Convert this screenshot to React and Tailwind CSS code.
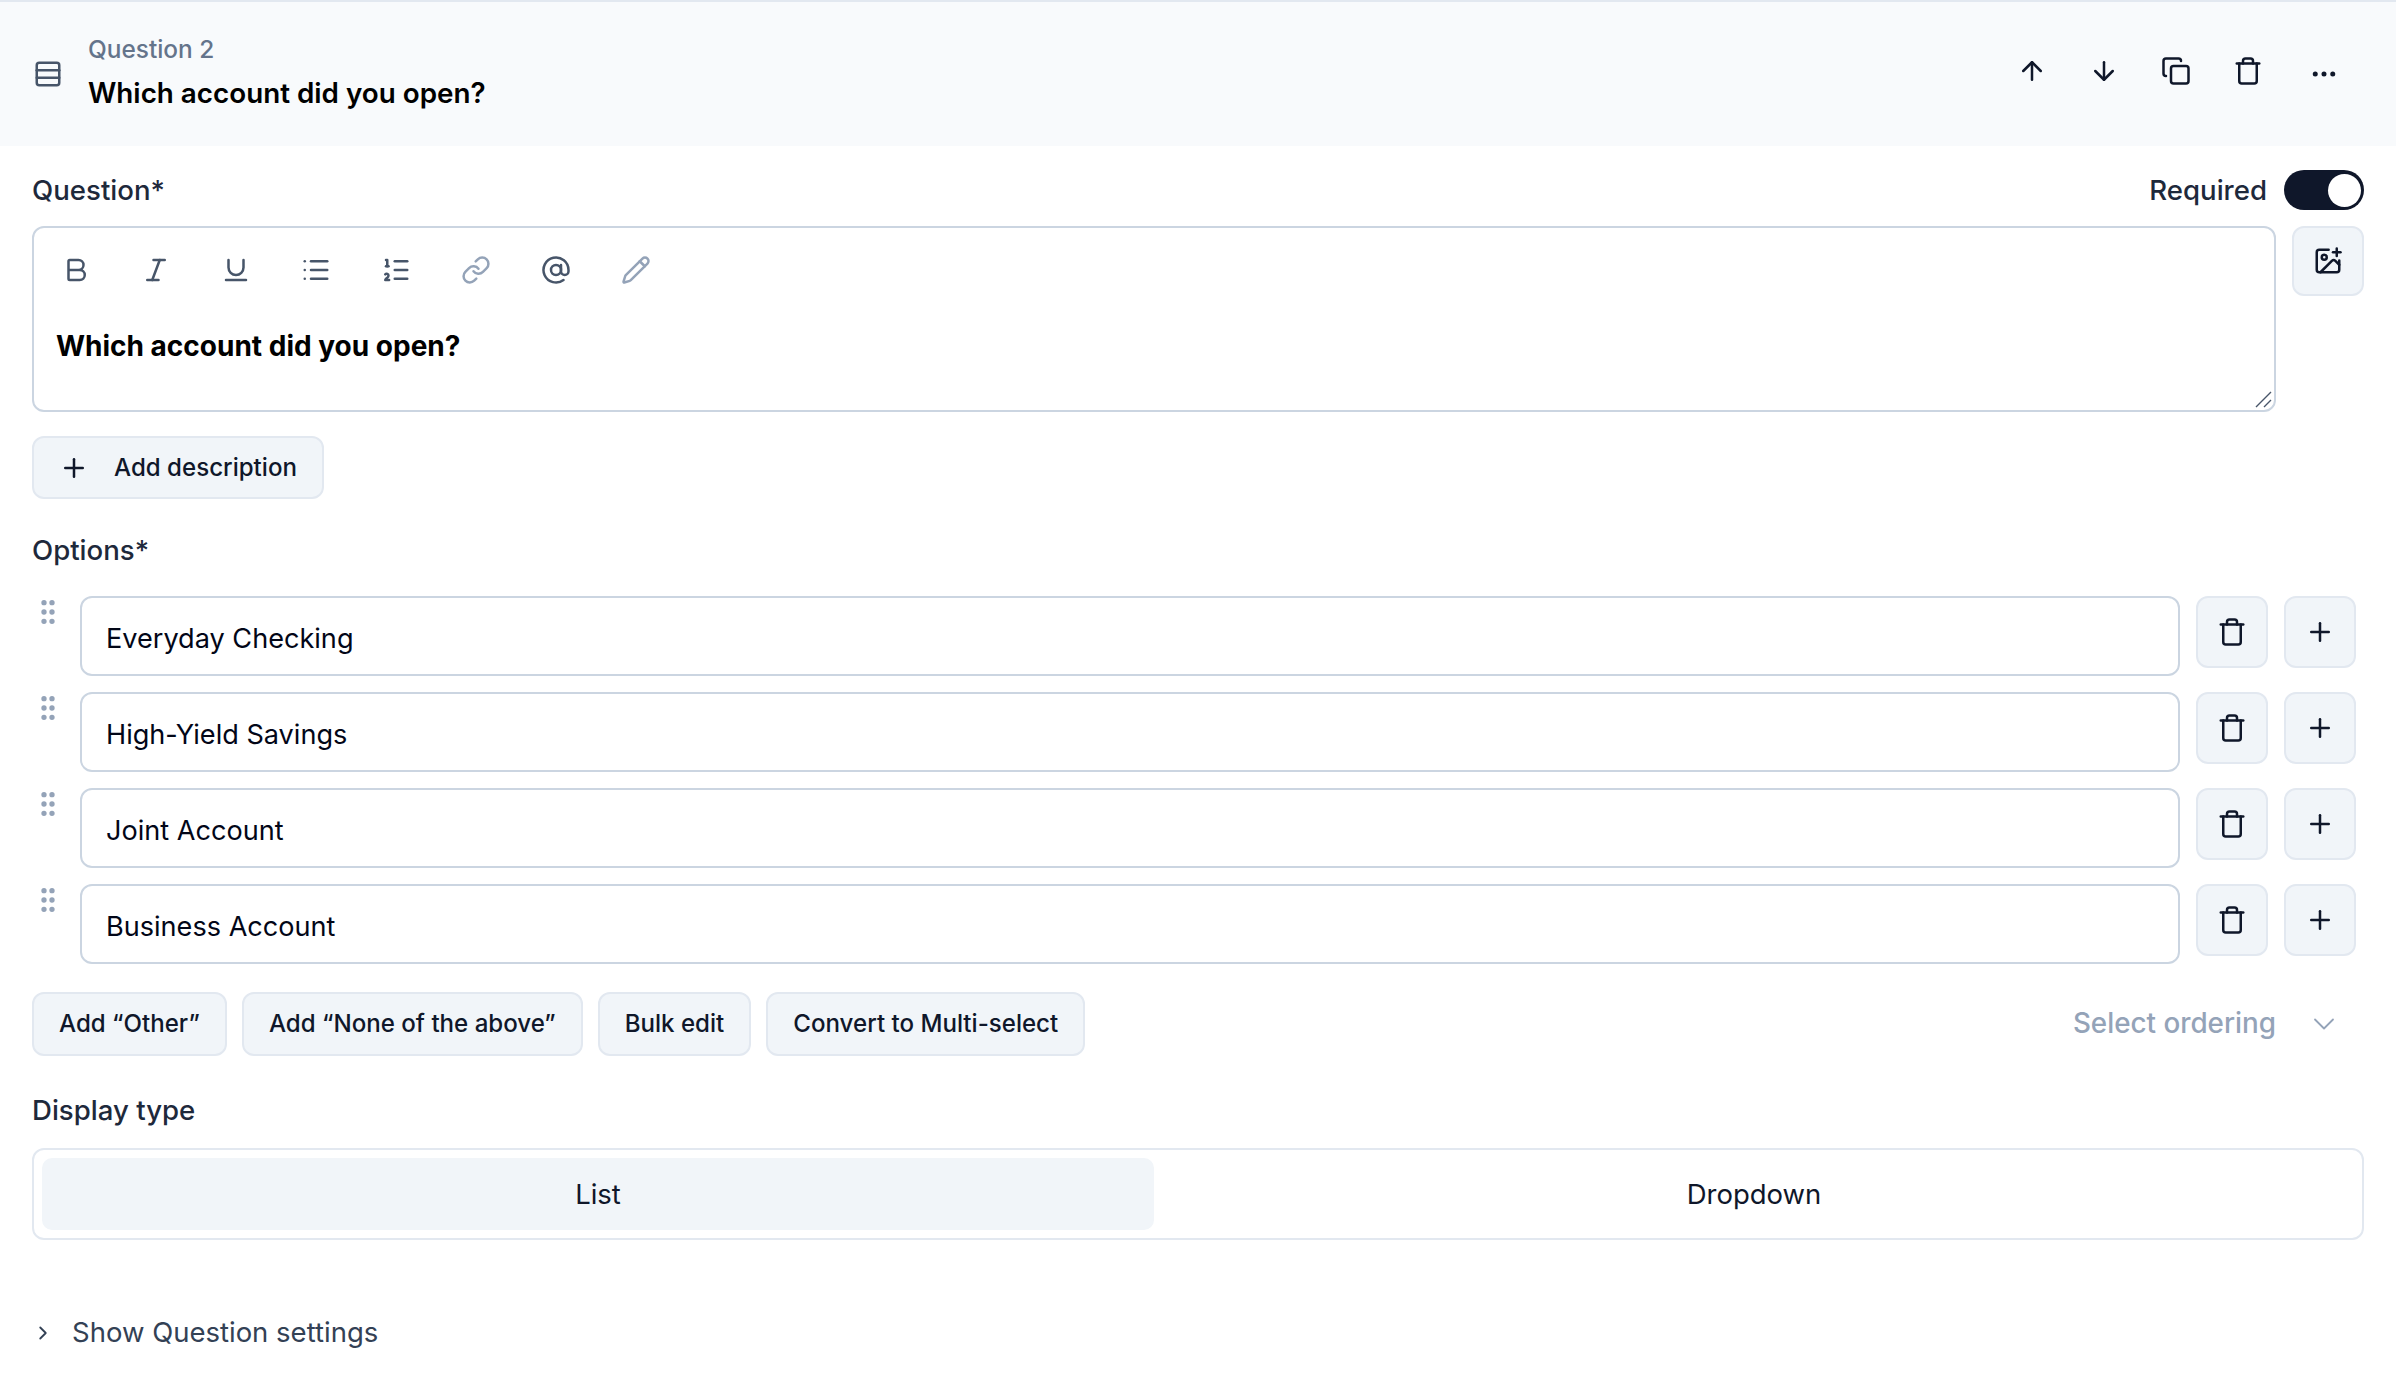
import React from "react";
import {
  ArrowUp,
  ArrowDown,
  Copy,
  Trash,
  Ellipsis,
  Rows3,
  Bold,
  Italic,
  Underline,
  List,
  ListOrdered,
  Link,
  AtSign,
  Pencil,
  ImagePlus,
  Plus,
  GripVertical,
  ChevronDown,
  ChevronRight,
} from "lucide-react";

const options = ["Everyday Checking", "High-Yield Savings", "Joint Account", "Business Account"];

const tools = [
  { icon: Bold, color: "text-[#475569]" },
  { icon: Italic, color: "text-[#475569]" },
  { icon: Underline, color: "text-[#475569]" },
  { icon: List, color: "text-[#475569]" },
  { icon: ListOrdered, color: "text-[#475569]" },
  { icon: Link, color: "text-[#94a3b8]" },
  { icon: AtSign, color: "text-[#475569]" },
  { icon: Pencil, color: "text-[#94a3b8]" },
];

const SquareButton = ({ children, className = "" }) => (
  <button className={`flex h-[72px] w-[72px] shrink-0 items-center justify-center rounded-xl border-2 border-[#e2e8f0] bg-[#f1f5f9] text-[#0f172a] ${className}`}>
    {children}
  </button>
);

const PillButton = ({ children }) => (
  <button className="flex h-[64px] items-center rounded-xl border-2 border-[#e2e8f0] bg-[#f1f5f9] px-[25px] text-[24.1px] font-medium text-[#0f172a]">
    {children}
  </button>
);

export default function App() {
  return (
    <div className="h-[1384px] w-full overflow-hidden bg-white font-['Inter',sans-serif]">
      {/* Header */}
      <div className="flex h-[146px] items-center border-t-2 border-[#e2e8f0] bg-[#f8fafc] pl-[33px] pr-[57px]">
        <Rows3 size={30} className="text-[#475569]" strokeWidth={2} />
        <div className="ml-[25px] flex-1 pb-[3px]">
          <div className="text-[24.4px] font-medium leading-[30px] text-[#64748b]">Question 2</div>
          <div className="mt-[11px] text-[27.8px] font-semibold leading-[36px] text-black">Which account did you open?</div>
        </div>
        <div className="-mt-[6px] flex items-center text-[#0f172a]">
          <ArrowUp size={30} />
          <ArrowDown size={30} className="ml-[42px]" />
          <Copy size={30} className="ml-[42px]" />
          <Trash size={30} className="ml-[42px]" />
          <Ellipsis size={30} className="ml-[46px] mt-[6px]" />
        </div>
      </div>

      <div className="pl-[32px] pr-[32px]">
        {/* Question */}
        <div className="mt-[24px] flex h-[40px] items-center justify-between">
          <span className="pt-[1px] text-[27.6px] font-medium text-[#1e293b]">Question*</span>
          <div className="flex items-center gap-[17px]">
            <span className="pt-[1px] text-[27.6px] font-medium text-[#1e293b]">Required</span>
            <div className="flex h-[40px] w-[80px] items-center justify-end rounded-full bg-[#0f172a] pr-[3px]">
              <div className="h-[33px] w-[33px] rounded-full bg-white" />
            </div>
          </div>
        </div>

        <div className="mt-[16px] flex items-start gap-[16px]">
          <div className="relative h-[186px] flex-1 rounded-xl border-2 border-[#cbd5e1] bg-white">
            <div className="flex pl-[2px] pt-[24px]">
              {tools.map(({ icon: Icon, color }, i) => (
                <div key={i} className="flex h-[36px] w-[80px] items-center justify-center">
                  <Icon size={30} className={color} />
                </div>
              ))}
            </div>
            <div className="ml-[22px] mt-[38px] text-[28px] font-bold leading-[40px] text-black">Which account did you open?</div>
            {/* resize handle */}
            <svg className="absolute bottom-[2px] right-[2px] h-[18px] w-[18px] text-[#475569]" viewBox="0 0 18 18" fill="none" stroke="currentColor" strokeWidth="1.4">
              <path d="M2 17 17 2M10 17l7-7" />
            </svg>
          </div>
          <SquareButton className="h-[70px]!">
            <ImagePlus size={30} />
          </SquareButton>
        </div>

        <button className="mt-[24px] flex h-[63px] w-[292px] items-center rounded-xl border-2 border-[#e2e8f0] bg-[#f1f5f9] pl-[25px] text-[24.1px] font-medium text-[#0f172a]">
          <Plus size={30} />
          <span className="ml-[25px] pt-[1px]">Add description</span>
        </button>

        {/* Options */}
        <div className="mt-[33px] h-[36px] text-[27.6px] font-medium leading-[36px] text-[#1e293b]">Options*</div>
        <div className="mt-[28px] flex flex-col gap-[16px]">
          {options.map((option) => (
            <div key={option} className="flex items-start pr-[8px]">
              <div className="w-[48px] shrink-0">
                <GripVertical size={32} className="text-[#94a3b8]" />
              </div>
              <div className="flex h-[80px] flex-1 items-center rounded-xl border-2 border-[#cbd5e1] bg-white pl-[24px] pt-[7px] text-[27.1px] text-[#020617]">
                {option}
              </div>
              <SquareButton className="ml-[16px]">
                <Trash size={30} />
              </SquareButton>
              <SquareButton className="ml-[16px]">
                <Plus size={30} />
              </SquareButton>
            </div>
          ))}
        </div>

        <div className="mt-[28px] flex items-center gap-[15px]">
          <PillButton>Add “Other”</PillButton>
          <PillButton>Add “None of the above”</PillButton>
          <PillButton>Bulk edit</PillButton>
          <PillButton>Convert to Multi-select</PillButton>
          <div className="ml-auto flex items-center gap-[39px] pr-[31px] text-[#94a3b8]">
            <span className="text-[27.8px] font-medium">Select ordering</span>
            <ChevronDown size={36} strokeWidth={1.2} className="-ml-[9px] -mr-[9px]" />
          </div>
        </div>

        {/* Display type */}
        <div className="mt-[36px] h-[36px] text-[27.6px] font-medium leading-[36px] text-[#1e293b]">Display type</div>
        <div className="mt-[20px] flex h-[92px] rounded-xl border-2 border-[#e2e8f0] bg-white p-[8px] text-[27.5px] text-[#0f172a]">
          <div className="flex w-[1112px] items-center justify-center rounded-[10px] bg-[#f1f5f9] pt-[1px]">List</div>
          <div className="flex flex-1 items-center justify-center pt-[1px]">Dropdown</div>
        </div>

        <div className="mt-[75px] flex h-[36px] items-center text-[#334155]">
          <ChevronRight size={22} />
          <span className="ml-[18px] text-[27.5px]">Show Question settings</span>
        </div>
      </div>
    </div>
  );
}
